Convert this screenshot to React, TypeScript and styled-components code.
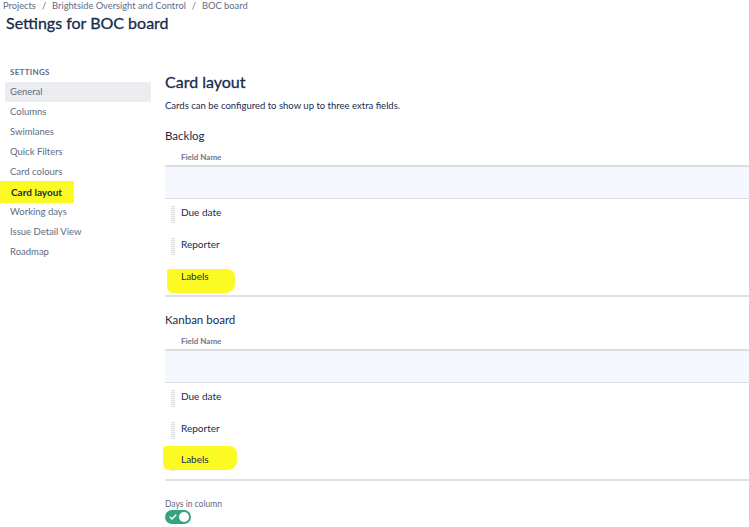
import React from "react";
import styled, { createGlobalStyle } from "styled-components";

const GlobalStyle = createGlobalStyle`
  html, body {
    margin: 0;
    padding: 0;
    background: #ffffff;
    overflow: hidden;
  }
  body {
    font-family: Lato, "Noto Sans", sans-serif;
    color: #172b4d;
  }
`;

const navItems = [
  "General",
  "Columns",
  "Swimlanes",
  "Quick Filters",
  "Card colours",
  "Card layout",
  "Working days",
  "Issue Detail View",
  "Roadmap",
];

const fields = ["Due date", "Reporter", "Labels"];

const FieldTable = ({ title }: { title: string }) => (
  <Section>
    <SectionTitle>{title}</SectionTitle>
    <ColumnHead>Field Name</ColumnHead>
    <AddRow />
    <Rows>
      {fields.map((f) => (
        <FieldRow key={f}>
          <Handle />
          {f === "Labels" ? <Marker $wide={title !== "Backlog"}>{f}</Marker> : <FieldLabel>{f}</FieldLabel>}
        </FieldRow>
      ))}
    </Rows>
  </Section>
);

export default function App() {
  return (
    <Page>
      <GlobalStyle />
      <Breadcrumbs>
        <span>Projects</span>
        <Sep>/</Sep>
        <span>Brightside Oversight and Control</span>
        <Sep>/</Sep>
        <span>BOC board</span>
      </Breadcrumbs>
      <Title>Settings for BOC board</Title>
      <Body>
        <Sidebar>
          <SidebarHeading>Settings</SidebarHeading>
          {navItems.map((item) => (
            <NavItem key={item} $active={item === "General"} $marked={item === "Card layout"}>
              {item === "Card layout" ? <NavMark>{item}</NavMark> : item}
            </NavItem>
          ))}
        </Sidebar>
        <Main>
          <Heading>Card layout</Heading>
          <Description>Cards can be configured to show up to three extra fields.</Description>
          <FieldTable title="Backlog" />
          <FieldTable title="Kanban board" />
          <ToggleLabel>Days in column</ToggleLabel>
          <Toggle>
            <svg width="8" height="8" viewBox="0 0 8 8">
              <path d="M1.2 4.2 L3.1 6 L6.8 2" fill="none" stroke="#fff" strokeWidth="1.4" strokeLinecap="round" strokeLinejoin="round" />
            </svg>
            <Knob />
          </Toggle>
        </Main>
      </Body>
    </Page>
  );
}

const Page = styled.div`
  width: 749px;
  height: 527px;
  overflow: hidden;
`;

const Breadcrumbs = styled.div`
  display: flex;
  align-items: center;
  margin: 0 0 0 3px;
  height: 11px;
  font-size: 9.3px;
  line-height: 11px;
  color: #5e6c84;
`;

const Sep = styled.span`
  margin: 0 6px;
`;

const Title = styled.h1`
  margin: 2px 0 0 6px;
  font-size: 16px;
  line-height: 20px;
  font-weight: 400;
  -webkit-text-stroke: 0.3px #172b4d;
  color: #172b4d;
`;

const Body = styled.div`
  display: grid;
  grid-template-columns: 146px 1fr;
  column-gap: 14px;
  margin: 34px 0 0 5px;
`;

const Sidebar = styled.nav`
  display: flex;
  flex-direction: column;
`;

const SidebarHeading = styled.div`
  margin: 0 0 5px 5px;
  font-size: 8px;
  line-height: 10px;
  font-weight: 700;
  letter-spacing: 0.3px;
  text-transform: uppercase;
  color: #5e6c84;
`;

const NavItem = styled.div<{ $active?: boolean; $marked?: boolean }>`
  height: 20px;
  line-height: 20px;
  padding-left: 5px;
  font-size: ${(p) => (p.$marked ? "10px" : "9.5px")};
  color: ${(p) => (p.$marked ? "#172b4d" : "#5e6c84")};
  font-weight: ${(p) => (p.$marked ? 700 : 400)};
  background: ${(p) => (p.$active ? "#ebecf0" : "transparent")};
`;

const NavMark = styled.span`
  display: inline-block;
  margin: -1px 0 0 -10px;
  padding: 1px 12px 1px 11px;
  line-height: 20px;
  background: #fbfb23;
`;

const Main = styled.main`
  display: flex;
  flex-direction: column;
  min-width: 0;
`;

const Heading = styled.h2`
  margin: 5px 0 0;
  font-size: 16px;
  line-height: 20px;
  font-weight: 400;
  -webkit-text-stroke: 0.3px #172b4d;
  color: #172b4d;
`;

const Description = styled.p`
  margin: 8px 0 0;
  font-size: 9.5px;
  line-height: 12px;
  color: #172b4d;
`;

const Section = styled.section`
  display: flex;
  flex-direction: column;
  margin-top: 17px;
  & + & {
    margin-top: 16px;
  }
`;

const SectionTitle = styled.h3`
  margin: 0;
  font-size: 11.5px;
  line-height: 14px;
  font-weight: 400;
  color: #172b4d;
`;

const ColumnHead = styled.div`
  margin-top: 9px;
  padding-left: 16px;
  font-size: 8px;
  line-height: 10px;
  font-weight: 700;
  color: #6b778c;
`;

const AddRow = styled.div`
  margin-top: 3px;
  height: 31px;
  background: #f4f7fd;
  border-top: 2px solid #dcdee3;
  border-bottom: 1px solid #dcdee3;
`;

const Rows = styled.div`
  display: flex;
  flex-direction: column;
  border-bottom: 2px solid #dfe1e6;
`;

const FieldRow = styled.div`
  display: flex;
  align-items: center;
  height: 32px;
  padding-left: 6px;
  box-sizing: border-box;
  padding-bottom: 6px;
`;

const Handle = styled.div`
  width: 4px;
  height: 17px;
  margin-top: 4px;
  background: repeating-linear-gradient(#e1e2e4 0 1px, #f5f5f6 1px 2px);
`;

const FieldLabel = styled.span`
  margin-left: 6px;
  font-size: 10px;
  line-height: 12px;
  color: #172b4d;
`;

const Marker = styled.span<{ $wide?: boolean }>`
  margin-left: ${(p) => (p.$wide ? "-12px" : "-8px")};
  margin-top: ${(p) => (p.$wide ? "-4px" : "10px")};
  padding: ${(p) => (p.$wide ? "7px 28px 5px 18px" : "1px 26px 11px 14px")};
  font-size: 10px;
  line-height: 12px;
  color: #172b4d;
  background: #fbfb23;
  border-radius: 3px 8px 9px 6px;
`;

const ToggleLabel = styled.div`
  margin-top: 18px;
  font-size: 8.5px;
  line-height: 10px;
  color: #5e6c84;
`;

const Toggle = styled.div`
  display: flex;
  align-items: center;
  justify-content: space-between;
  box-sizing: border-box;
  width: 26px;
  height: 14px;
  margin-top: 1px;
  padding: 0 2px 0 4px;
  border-radius: 7px;
  background: #36a47a;
`;

const Knob = styled.div`
  width: 10px;
  height: 10px;
  border-radius: 50%;
  background: #ffffff;
`;
